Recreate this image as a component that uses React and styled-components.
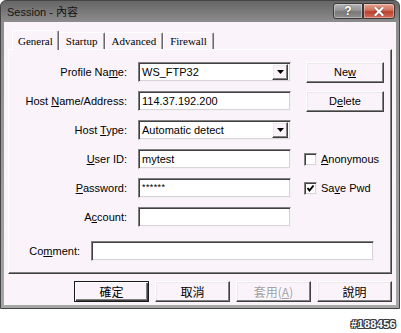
import React from "react";
import styled, { createGlobalStyle, css } from "styled-components";

const GlobalStyle = createGlobalStyle`
  html, body { margin: 0; padding: 0; background: #ffffff; }
  body { font-family: "Liberation Sans", Arial, sans-serif; }
  * { box-sizing: border-box; }
`;

const UI = `"Liberation Sans", "Noto Sans CJK TC", sans-serif`;
const CJK = `"Noto Sans CJK TC", "Liberation Sans", sans-serif`;
const SERIF = `"Liberation Serif", "Times New Roman", serif`;
const BG = "#faf4fa";

const raised = css`
  background: ${BG};
  border: 1px solid;
  border-color: #ffffff #404040 #404040 #ffffff;
  box-shadow: inset -1px -1px #808080, inset 1px 1px #ece8ec;
`;

const sunken = css`
  border: 1px solid;
  border-color: #808080 #f4f0f4 #f4f0f4 #808080;
  box-shadow: inset 1px 1px #404040, inset -1px -1px #d8d4d8;
  background: #ffffff;
`;

const Page = styled.div`
  width: 401px;
  height: 333px;
  overflow: hidden;
  display: flex;
  flex-direction: column;
`;

const Window = styled.div`
  width: 400px;
  border: 1px solid #464646;
  border-radius: 6px 6px 0 0;
  padding: 0 3px 3px;
  background: linear-gradient(180deg, #666666 0px, #7c7c7c 12px, #8e8e8e 22px, #a6a6a6 100%);
  display: flex;
  flex-direction: column;
`;

const TitleBar = styled.div`
  height: 21px;
  display: flex;
  align-items: flex-start;
  justify-content: space-between;
  padding-left: 3px;
`;

const Title = styled.div`
  font: 11px ${UI};
  color: #141414;
  line-height: 21px;
  padding-top: 1px;
`;

const CaptionButtons = styled.div`
  display: flex;
  margin-top: 2px;
  margin-right: 1px;
`;

const CaptionButton = styled.div`
  height: 16px;
  width: ${(p) => (p.$close ? 32 : 30)}px;
  border: 1px solid #3a3a3a;
  border-radius: ${(p) => (p.$close ? "0 3px 3px 0" : "3px 0 0 3px")};
  background: ${(p) =>
    p.$close
      ? "linear-gradient(180deg, #e6a593 0%, #d0705e 45%, #bd3f2e 55%, #d2705a 100%)"
      : "linear-gradient(180deg, #b4b4b4 0%, #959595 45%, #7a7a7a 55%, #8e8e8e 100%)"};
  box-shadow: inset 0 0 0 1px rgba(255, 255, 255, 0.35);
  display: flex;
  align-items: center;
  justify-content: center;
  color: #ffffff;
  font: bold 12px ${UI};
  text-shadow: 0 0 2px #333;
`;

const Client = styled.div`
  background: ${BG};
  padding: 8px 4px 3px;
  display: flex;
  flex-direction: column;
`;

const TabStrip = styled.div`
  display: flex;
  align-items: flex-end;
  height: 19px;
  padding-left: 4px;
`;

const Tab = styled.div`
  font: 11px ${SERIF};
  color: #000;
  height: 17px;
  line-height: 17px;
  padding: 0 6px;
  background: ${BG};
  border-top: 1px solid #ffffff;
  border-left: 1px solid #ffffff;
  border-right: 1px solid #686868;
  box-shadow: inset -1px 0 #a8a8a8;
  border-radius: 2px 2px 0 0;
  ${(p) =>
    p.$active &&
    css`
      height: 20px;
      line-height: 20px;
      padding: 0 5px;
      margin-bottom: -1px;
      position: relative;
      z-index: 1;
    `}
`;

const Panel = styled.div`
  border: 1px solid;
  border-color: #ffffff #404040 #404040 #ffffff;
  box-shadow: inset -1px -1px #808080;
  padding: 12px 0 12px;
`;

const FormGrid = styled.div`
  display: grid;
  grid-template-columns: 129px 153px 1fr;
  grid-auto-rows: 20px;
  row-gap: 9px;
  align-items: center;
`;

const Label = styled.div`
  font: 11px ${UI};
  color: #000;
  text-align: right;
  padding-right: 11px;
  white-space: nowrap;
`;

const Key = styled.span`
  text-decoration: underline;
  text-underline-offset: 1px;
`;

const Field = styled.div`
  ${sunken};
  height: 20px;
  display: flex;
  align-items: center;
  padding: 0 2px 0 3px;
  font: 11px ${UI};
  color: #000;
  white-space: nowrap;
  overflow: hidden;
`;

const Secret = styled.span`
  font: 9px ${UI};
  letter-spacing: 0.4px;
  margin-top: -3px;
`;

const FieldText = styled.span`
  flex: 1;
`;

const DropButton = styled.div`
  ${raised};
  width: 16px;
  height: 16px;
  display: flex;
  align-items: center;
  justify-content: center;
`;

const PushButton = styled.div`
  ${raised};
  margin-left: 15px;
  width: 78px;
  height: 21px;
  display: flex;
  align-items: center;
  justify-content: center;
  font: 11px ${UI};
  color: #000;
`;

const CheckRow = styled.div`
  margin-left: 13px;
  display: flex;
  align-items: center;
  gap: 4px;
  font: 11px ${UI};
  color: #000;
`;

const CheckBox = styled.div`
  ${sunken};
  width: 13px;
  height: 13px;
  display: flex;
  align-items: center;
  justify-content: center;
`;

const CommentRow = styled.div`
  display: grid;
  grid-template-columns: 82px 283px;
  align-items: center;
  margin-top: 14px;
`;

const ButtonRow = styled.div`
  display: flex;
  justify-content: flex-end;
  gap: 6px;
  padding-top: 7px;
`;

const DialogButton = styled.div`
  ${raised};
  width: 75px;
  height: 21px;
  display: flex;
  align-items: center;
  justify-content: center;
  font: 12px ${CJK};
  color: ${(p) => (p.$disabled ? "#a4a0a4" : "#000")};
  text-shadow: ${(p) => (p.$disabled ? "1px 1px #ffffff" : "none")};
  ${(p) =>
    p.$default &&
    css`
      border: 1px solid #1a1a1a;
      box-shadow: inset 1px 1px #ffffff, inset -1px -1px #404040, inset -2px -2px #808080;
    `}
`;

const Watermark = styled.div`
  flex: 1;
  display: flex;
  align-items: center;
  justify-content: flex-end;
  padding: 6px 5px 0 0;
  font: bold 11px ${UI};
  color: #ffffff;
  letter-spacing: 0.3px;
  text-shadow: 1px 0 #3a3a3a, -1px 0 #3a3a3a, 0 1px #3a3a3a, 0 -1px #3a3a3a,
    1px 1px #3a3a3a, -1px -1px #3a3a3a, 1px -1px #3a3a3a, -1px 1px #3a3a3a;
`;

const Arrow = () => (
  <svg width="7" height="4" viewBox="0 0 7 4">
    <polygon points="0,0 7,0 3.5,4" fill="#000" />
  </svg>
);

const CloseGlyph = () => (
  <svg width="10" height="9" viewBox="0 0 10 9">
    <path d="M1.5 1 L8.5 8 M8.5 1 L1.5 8" stroke="#3a2a2a" strokeWidth="3.4" strokeLinecap="square" opacity="0.55" />
    <path d="M1.5 1 L8.5 8 M8.5 1 L1.5 8" stroke="#ffffff" strokeWidth="2.2" strokeLinecap="square" />
  </svg>
);

const Check = () => (
  <svg width="9" height="9" viewBox="0 0 9 9">
    <polyline points="1.5,4 3.5,6.5 7.5,1.5" fill="none" stroke="#000" strokeWidth="2" />
  </svg>
);

const Combo = ({ value }) => (
  <Field>
    <FieldText>{value}</FieldText>
    <DropButton>
      <Arrow />
    </DropButton>
  </Field>
);

export default function App() {
  return (
    <>
      <GlobalStyle />
      <Page>
        <Window>
          <TitleBar>
            <Title>Session - 內容</Title>
            <CaptionButtons>
              <CaptionButton>?</CaptionButton>
              <CaptionButton $close>
                <CloseGlyph />
              </CaptionButton>
            </CaptionButtons>
          </TitleBar>
          <Client>
            <TabStrip>
              <Tab $active>General</Tab>
              <Tab>Startup</Tab>
              <Tab>Advanced</Tab>
              <Tab>Firewall</Tab>
            </TabStrip>
            <Panel>
              <FormGrid>
                <Label>
                  Profile Na<Key>m</Key>e:
                </Label>
                <Combo value="WS_FTP32" />
                <PushButton>
                  Ne<Key>w</Key>
                </PushButton>

                <Label>
                  Host <Key>N</Key>ame/Address:
                </Label>
                <Field>114.37.192.200</Field>
                <PushButton>
                  D<Key>e</Key>lete
                </PushButton>

                <Label>
                  Host <Key>T</Key>ype:
                </Label>
                <Combo value="Automatic detect" />
                <div />

                <Label>
                  <Key>U</Key>ser ID:
                </Label>
                <Field>mytest</Field>
                <CheckRow>
                  <CheckBox />
                  <span>
                    <Key>A</Key>nonymous
                  </span>
                </CheckRow>

                <Label>
                  <Key>P</Key>assword:
                </Label>
                <Field>
                  <Secret>******</Secret>
                </Field>
                <CheckRow>
                  <CheckBox>
                    <Check />
                  </CheckBox>
                  <span>
                    Sa<Key>v</Key>e Pwd
                  </span>
                </CheckRow>

                <Label>
                  A<Key>c</Key>count:
                </Label>
                <Field />
                <div />
              </FormGrid>
              <CommentRow>
                <Label>
                  Co<Key>m</Key>ment:
                </Label>
                <Field />
              </CommentRow>
            </Panel>
            <ButtonRow>
              <DialogButton $default>確定</DialogButton>
              <DialogButton>取消</DialogButton>
              <DialogButton $disabled>
                套用(<Key>A</Key>)
              </DialogButton>
              <DialogButton>說明</DialogButton>
            </ButtonRow>
          </Client>
        </Window>
        <Watermark>#188456</Watermark>
      </Page>
    </>
  );
}
